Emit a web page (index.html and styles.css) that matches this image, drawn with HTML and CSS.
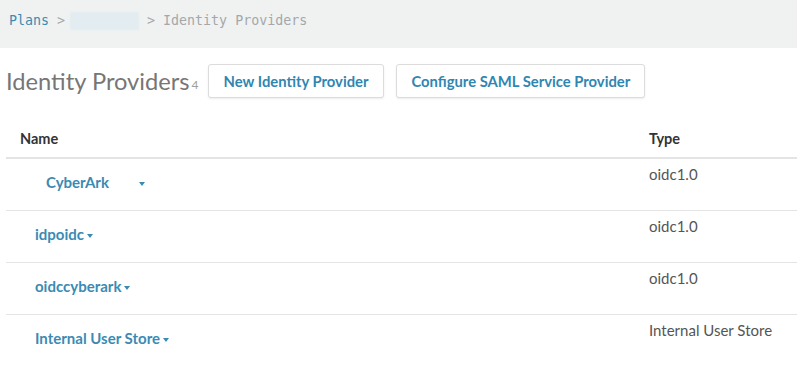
FILE: index.html
```html
<!DOCTYPE html>
<html lang="en">
<head>
  <meta charset="UTF-8">
  <title>Identity Providers</title>
  <link rel="stylesheet" href="styles.css">
</head>
<body>
  <div class="crumbs">
    <a class="crumb-link" href="#">Plans</a> &gt; <span class="crumb-blur"></span> &gt; Identity Providers
  </div>

  <div class="page">
    <div class="title-row">
      <h1>Identity Providers</h1>
      <span class="count">4</span>
      <button class="btn">New Identity Provider</button>
      <button class="btn">Configure SAML Service Provider</button>
    </div>

    <table class="idp-table">
      <tr class="head">
        <th class="col-name">Name</th>
        <th>Type</th>
      </tr>
      <tr>
        <td class="name-cell"><a class="idp-link first" href="#">CyberArk<span class="caret wide"></span></a></td>
        <td class="type-cell">oidc1.0</td>
      </tr>
      <tr>
        <td class="name-cell"><a class="idp-link" href="#">idpoidc<span class="caret"></span></a></td>
        <td class="type-cell">oidc1.0</td>
      </tr>
      <tr>
        <td class="name-cell"><a class="idp-link" href="#">oidccyberark<span class="caret"></span></a></td>
        <td class="type-cell">oidc1.0</td>
      </tr>
      <tr class="last">
        <td class="name-cell"><a class="idp-link" href="#">Internal User Store<span class="caret"></span></a></td>
        <td class="type-cell">Internal User Store</td>
      </tr>
    </table>
  </div>
</body>
</html>
```

FILE: styles.css
```css
body {
  margin: 0;
  background: #fff;
  font-family: Lato, "Open Sans", sans-serif;
  color: #555;
}

.crumbs {
  width: 797px;
  height: 48px;
  box-sizing: border-box;
  padding: 12px 0 0 9px;
  background: #f0f2f2;
  font-family: "DejaVu Sans Mono", monospace;
  font-size: 13.3px;
  line-height: 18px;
  color: #a3a8ab;
}

.crumb-link {
  color: #3a8bb3;
  text-decoration: none;
}

.crumb-blur {
  display: inline-block;
  width: 69px;
  height: 18px;
  margin-left: -3px;
  vertical-align: top;
  background: #e2ecf1;
  filter: blur(1px);
}

.page {
  padding-left: 6px;
}

.title-row {
  display: flex;
  align-items: center;
  margin-top: 16px;
  height: 34px;
}

h1 {
  margin: 0;
  font-size: 23.7px;
  font-weight: 400;
  color: #767676;
  line-height: 34px;
}

.count {
  font-size: 12px;
  color: #a0a0a0;
  margin: 7px 9px 0 2px;
}

.btn {
  height: 34px;
  padding: 0 15px;
  margin-right: 12px;
  background: #fff;
  border: 1px solid #dcdcdc;
  border-radius: 3px;
  box-shadow: 0 1px 2px rgba(0, 0, 0, 0.08);
  font-family: Lato, sans-serif;
  font-size: 14.8px;
  font-weight: 700;
  color: #2f86b2;
}

.btn + .btn {
  padding: 0 14px;
}

.idp-table {
  width: 791px;
  border-collapse: collapse;
  margin-top: 17px;
}

.idp-table tr {
  height: 52px;
}

.idp-table tr.head {
  height: 43px;
}

.idp-table th {
  padding: 4px 0 0 14px;
  text-align: left;
  font-size: 14.5px;
  font-weight: 700;
  color: #333;
  border-bottom: 2px solid #e4e4e4;
}

.idp-table th.col-name {
  width: 629px;
}

.idp-table th + th {
  padding-left: 0;
}

.idp-table td {
  padding: 0;
  border-bottom: 1px solid #e4e4e4;
  font-size: 15px;
}

.idp-table tr.last td {
  border-bottom: none;
}

.name-cell {
  padding: 0 0 4px 29px !important;
  vertical-align: middle;
}

.type-cell {
  vertical-align: top;
  padding-top: 6px !important;
  color: #555;
}

.idp-link {
  color: #3a8bb3;
  font-weight: 700;
  text-decoration: none;
}

.idp-link.first {
  margin-left: 11px;
}

.caret {
  display: inline-block;
  width: 0;
  height: 0;
  margin-left: 3px;
  vertical-align: middle;
  border-left: 3px solid transparent;
  border-right: 3px solid transparent;
  border-top: 4px solid #3a8bb3;
}

.caret.wide {
  margin-left: 30px;
}
```
